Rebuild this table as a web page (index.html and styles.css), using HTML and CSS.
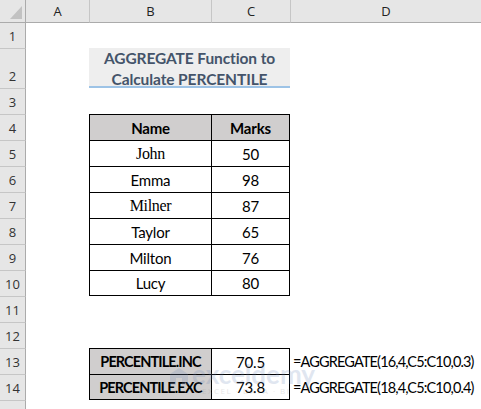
FILE: index.html
```html
<!DOCTYPE html>
<html>
<head>
<meta charset="utf-8">
<link rel="stylesheet" href="styles.css">
</head>
<body>
<div class="sheet">
  <div class="corner"><span class="tri"></span></div>
  <div class="ch cha">A</div>
  <div class="ch">B</div>
  <div class="ch">C</div>
  <div class="ch">D</div>

  <div class="rh first">1</div><div></div><div></div><div></div><div></div>

  <div class="rh">2</div><div></div>
  <div class="title">AGGREGATE Function to<br>Calculate PERCENTILE</div>
  <div></div>

  <div class="rh">3</div><div></div><div></div><div></div><div></div>

  <div class="rh">4</div><div></div>
  <div class="t hd">Name</div><div class="t r hd">Marks</div><div></div>

  <div class="rh">5</div><div></div>
  <div class="t serif">John</div><div class="t r">50</div><div></div>

  <div class="rh">6</div><div></div>
  <div class="t">Emma</div><div class="t r">98</div><div></div>

  <div class="rh">7</div><div></div>
  <div class="t serif">Milner</div><div class="t r">87</div><div></div>

  <div class="rh">8</div><div></div>
  <div class="t">Taylor</div><div class="t r">65</div><div></div>

  <div class="rh">9</div><div></div>
  <div class="t">Milton</div><div class="t r">76</div><div></div>

  <div class="rh">10</div><div></div>
  <div class="t b">Lucy</div><div class="t r b">80</div><div></div>

  <div class="rh">11</div><div></div><div></div><div></div><div></div>
  <div class="rh">12</div><div></div><div></div><div></div><div></div>

  <div class="rh">13</div><div></div>
  <div class="t hd caps">PERCENTILE.INC</div><div class="t r">70.5</div>
  <div class="formula">=AGGREGATE(16,4,C5:C10,0.3)</div>

  <div class="rh">14</div><div></div>
  <div class="t hd b caps">PERCENTILE.EXC</div><div class="t r b">73.8</div>
  <div class="formula">=AGGREGATE(18,4,C5:C10,0.4)</div>

  <div class="rh"></div><div></div><div></div><div></div><div></div>
</div>

<div class="watermark">
  <svg class="wm-icon" width="22" height="22" viewBox="0 0 22 22">
    <path d="M2 9 L11 3 L20 9 L20 20 L14 20 L14 13 L8 13 L8 20 L2 20 Z" fill="#6a86b8"/>
  </svg>
  <div class="wm-text">
    <div class="wm-name">exceldemy</div>
    <div class="wm-sub">EXCEL · DATA · BI</div>
  </div>
</div>
</body>
</html>
```

FILE: styles.css
```css
html, body {
  margin: 0;
  padding: 0;
  background: #ffffff;
  overflow: hidden;
}

body {
  width: 481px;
  height: 409px;
  position: relative;
  font-family: Lato, "Liberation Sans", sans-serif;
}

.sheet {
  display: grid;
  grid-template-columns: 26px 63px 122px 79px 191px;
  grid-template-rows: 23px 25px 40px repeat(13, 26px);
  font-size: 15px;
  color: #000;
}

.sheet > div {
  box-sizing: border-box;
  min-width: 0;
}

.corner {
  background: #e6e6e6;
  border-right: 1px solid #ababab;
  border-bottom: 1px solid #ababab;
  position: relative;
}

.tri {
  position: absolute;
  right: 3px;
  bottom: 3px;
  width: 0;
  height: 0;
  border-left: 12px solid transparent;
  border-bottom: 13px solid #c2c2c2;
}

.ch {
  background: #e6e6e6;
  border-left: 1px solid #c6c6c6;
  border-bottom: 1px solid #ababab;
  display: flex;
  align-items: center;
  justify-content: center;
  font-family: "Open Sans", "Noto Sans", sans-serif;
  font-size: 13px;
  color: #222;
}

.cha {
  border-left: none;
}

.rh {
  background: #e6e6e6;
  border-right: 1px solid #ababab;
  border-top: 1px solid #c6c6c6;
  display: flex;
  align-items: flex-end;
  justify-content: center;
  padding-bottom: 3px;
  font-family: "Open Sans", "Noto Sans", sans-serif;
  font-size: 13px;
  color: #333;
}

.rh.first {
  border-top: none;
}

.title {
  grid-column: span 2;
  background: #eeeeee;
  border-bottom: 2px solid #9dc3e6;
  color: #44546a;
  font-weight: 700;
  font-size: 15.5px;
  line-height: 21px;
  text-align: center;
  padding-top: 0;
  letter-spacing: -0.1px;
  white-space: nowrap;
  overflow: hidden;
}

.t {
  border-left: 1px solid #000;
  border-top: 1px solid #000;
  display: flex;
  align-items: center;
  justify-content: center;
  white-space: nowrap;
  letter-spacing: -0.2px;
}

.t.r {
  border-right: 1px solid #000;
}

.t.b {
  border-bottom: 1px solid #000;
}

.hd {
  background: #d0cece;
  font-weight: 700;
}

.caps {
  font-size: 14.5px;
  letter-spacing: -0.9px;
}

.serif {
  font-family: "Liberation Serif", serif;
  font-size: 16px;
  letter-spacing: -0.3px;
}

.formula {
  display: flex;
  align-items: center;
  padding-left: 3px;
  white-space: nowrap;
  font-size: 14.5px;
  letter-spacing: -0.85px;
}

.watermark {
  position: absolute;
  left: 168px;
  top: 362px;
  display: flex;
  align-items: flex-start;
  gap: 2px;
  opacity: 0.2;
  pointer-events: none;
}

.wm-icon {
  margin-top: 3px;
}

.wm-text {
  display: flex;
  flex-direction: column;
  align-items: flex-start;
}

.wm-name {
  font-family: Lato, sans-serif;
  font-weight: 700;
  font-size: 26px;
  line-height: 24px;
  color: #6a86b8;
}

.wm-sub {
  font-family: "Open Sans", sans-serif;
  font-size: 8px;
  letter-spacing: 1.5px;
  color: #888;
  margin-left: 10px;
  line-height: 10px;
}
```
